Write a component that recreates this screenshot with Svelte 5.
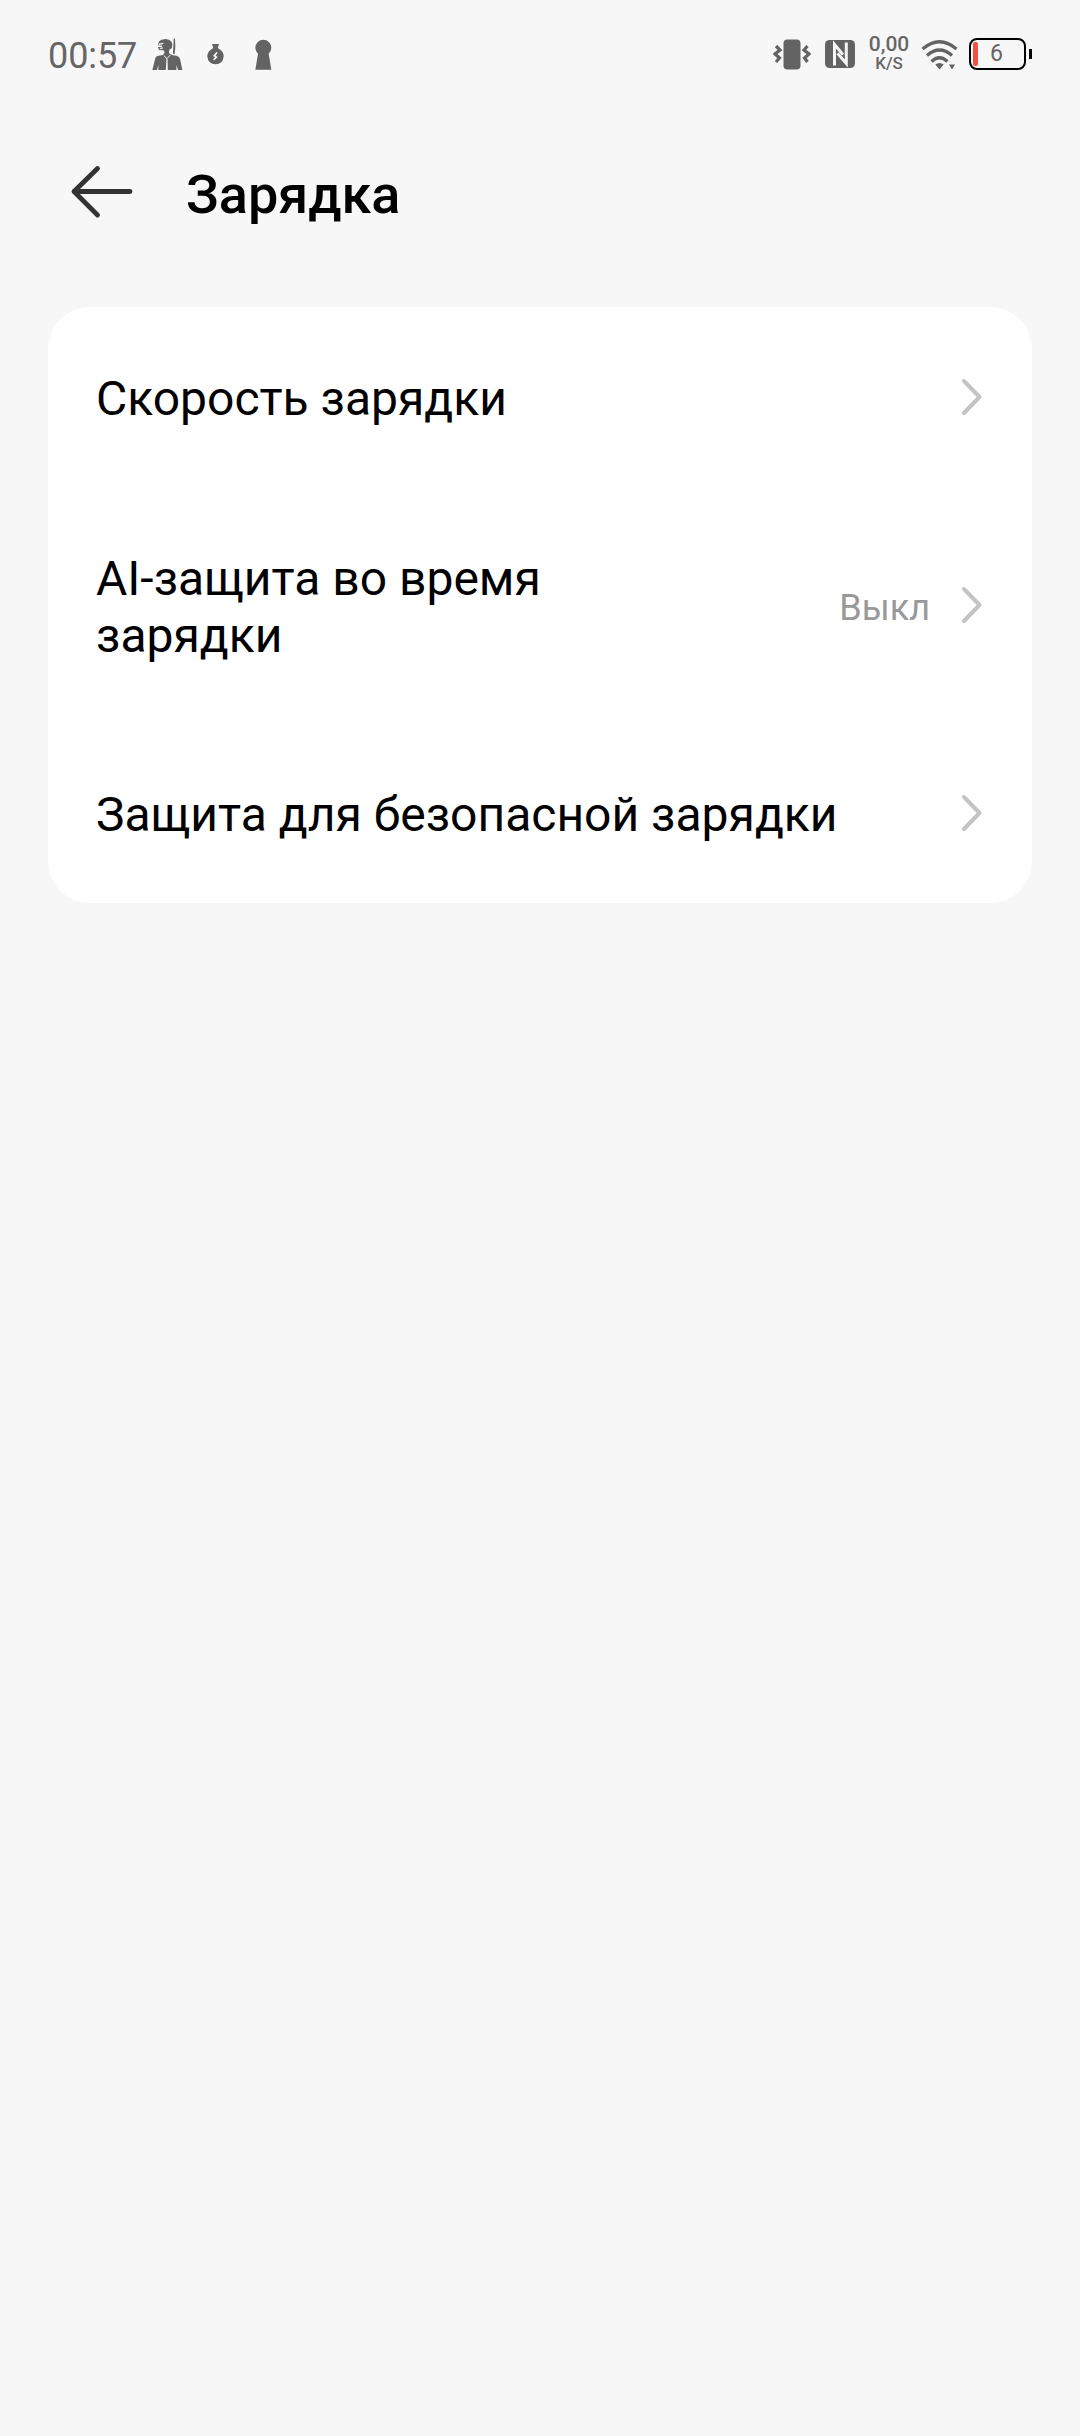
<script>
  const rows = [
    { title: "Скорость зарядки" },
    { title: "AI-защита во время зарядки", value: "Выкл" },
    { title: "Защита для безопасной зарядки" },
  ];
</script>

<div class="screen">
  <header class="status">
    <div class="left">
      <span class="time">00:57</span>
      <!-- game notification -->
      <svg class="soldier" width="32" height="34" viewBox="0 0 96 102">
        <path
          d="M4 99 L13 63 Q15 57 22 56 L35 54 L41 47 L38 40 L24 39 L21 30 L33 30 L33 26 L21 25 L23 14 Q30 6 43 6 Q62 7 64 22 L63 33 L55 38 L54 49 L66 55 L76 56 Q84 58 87 65 L94 99 L81 99 L77 84 L76 99 L53 99 L51 68 L45 58 L40 70 L39 99 L22 99 L22 84 L18 99 Z"
        />
        <path d="M68 6 L70 3 L72 6 L73 30 L71 52 L66 50 Z" />
        <path class="cut" d="M22 20 L36 17 L38 21 L24 24 Z M26 33 L36 31 L35 35 L27 36 Z" />
        <path d="M40 58 H56 L54 99 H50 L48 62 L44 99 H38 Z" />
        <path class="seam" d="M38 55 L48 65 L59 53 M48 65 L48 99" />
      </svg>
      <svg class="bag" width="17" height="22" viewBox="0 0 51 66">
        <path d="M15 3 H36 L32 15 Q50 24 50 40 Q48 64 25.500 64 Q3 64 1 40 Q1 24 19 15 Z" />
        <path class="cut" d="M28 27 L18 39 L24 42 L18 50 L22 52 L32 42 L26 38 L32 29 Z" />
      </svg>
      <svg class="keyhole" width="17" height="31" viewBox="0 0 51 93">
        <path d="M1 92 L9 44 A24 24 0 1 1 41 44 L49 92 Z" />
      </svg>
    </div>

    <div class="right">
      <svg class="vibrate" width="38" height="32" viewBox="0 0 38 32">
        <rect x="10.500" y="1.500" width="17" height="30" rx="4" />
        <path d="M3 8 L7 12 L2 16 L6.500 20 L3 24" />
        <path d="M34.500 8 L31 12 L36 16 L31.500 20 L34.500 24" />
      </svg>
      <svg class="nfc" width="30" height="28" viewBox="0 0 30 28">
        <rect width="30" height="28" rx="4.500" />
        <path d="M9.500 24 V4.500 L17 13.500" />
        <path d="M21.300 4 V23.500 L13.500 14.500" />
      </svg>
      <div class="speed">
        <span>0,00</span>
        <small>K/S</small>
      </div>
      <svg class="wifi" width="37" height="31" viewBox="0 0 37 31">
        <path d="M1.500 10 Q18.500 -4.500 35.500 10" />
        <path d="M6 16.500 Q18.500 5.500 31 16.500" />
        <path d="M10.500 22.500 Q18.500 15 26.500 22.500" />
        <path class="dot" d="M14.300 25.500 Q18.500 22.500 22.700 25.500 L18.500 30.500 Z M28 25.500 H34 L31 30.500 Z" />
      </svg>
      <div class="battery">
        <i></i>
        <span>6</span>
      </div>
      <b class="nub"></b>
    </div>
  </header>

  <nav>
    <svg class="back" width="64" height="54" viewBox="0 0 64 54">
      <path d="M28.500 3.500 L5 26.500 L28.500 50 M5 26.500 H61" />
    </svg>
    <h1>Зарядка</h1>
  </nav>

  <main>
    {#each rows as row}
      <div class="row">
        <span class="title">{row.title}</span>
        {#if row.value}
          <span class="value">{row.value}</span>
        {/if}
        <svg class="chevron" width="22" height="38" viewBox="0 0 22 38">
          <path d="M2 3 L17.500 19 L2 35" />
        </svg>
      </div>
    {/each}
  </main>
</div>

<style>
  :global(body) {
    background: #f7f7f7;
  }

  .screen {
    box-sizing: border-box;
    width: 1080px;
    height: 2436px;
    background: #f7f7f7;
    color: #000;
    font-family: Roboto, "Noto Sans", sans-serif;
    overflow: hidden;
  }

  svg {
    display: block;
    flex: none;
  }

  /* status bar */
  .status {
    display: flex;
    justify-content: space-between;
    height: 108px;
    padding: 0 48px;
    color: #666;
  }

  .left,
  .right {
    display: flex;
    align-items: center;
    height: 108px;
  }

  .left svg,
  .nfc rect,
  .vibrate rect {
    fill: #636363;
  }

  .left .cut {
    fill: #f7f7f7;
  }

  .left .seam {
    fill: none;
    stroke: #f7f7f7;
    stroke-width: 3;
  }

  .time {
    width: 103px;
    font-size: 36px;
    line-height: 42px;
    margin-top: 3px;
    letter-spacing: -0.1px;
  }

  .soldier {
    margin-right: 24px;
  }

  .bag {
    margin-right: 31px;
  }

  .vibrate {
    margin-right: 14px;
  }

  .vibrate path,
  .wifi path {
    fill: none;
    stroke: #636363;
    stroke-width: 3.2;
  }

  .nfc {
    margin-right: 14px;
  }

  .nfc path {
    fill: none;
    stroke: #f7f7f7;
    stroke-width: 3;
    stroke-linecap: square;
  }

  .speed {
    display: flex;
    flex-direction: column;
    align-items: center;
    width: 40px;
    margin: -2px 12px 0 0;
    font-weight: 500;
  }

  .speed span {
    font-size: 21px;
    line-height: 20px;
  }

  .speed small {
    font-size: 17px;
    line-height: 18px;
  }

  .wifi {
    margin-right: 11px;
  }

  .wifi .dot {
    fill: #636363;
    stroke: none;
  }

  .battery {
    box-sizing: border-box;
    display: flex;
    align-items: center;
    width: 57px;
    height: 32px;
    padding: 0 2px;
    border: 2px solid #000;
    border-radius: 8px;
  }

  .battery i {
    width: 5px;
    height: 24px;
    border-radius: 2px;
    background: #f25243;
  }

  .battery span {
    margin-left: 12px;
    font-size: 23px;
    line-height: 26px;
  }

  .nub {
    width: 3px;
    height: 10px;
    margin-left: 3px;
    background: #000;
  }

  /* title bar */
  nav {
    display: flex;
    align-items: center;
    height: 168px;
    padding-left: 69px;
  }

  .back path {
    fill: none;
    stroke: #333;
    stroke-width: 4.8;
    stroke-linecap: round;
    stroke-linejoin: round;
  }

  h1 {
    margin: 6px 0 0 53px;
    font-size: 54px;
    font-weight: 500;
    line-height: 64px;
  }

  /* settings card */
  main {
    display: flex;
    flex-direction: column;
    gap: 28px;
    margin: 31px 48px 0;
    border-radius: 42px;
    background: #fff;
  }

  .row {
    display: flex;
    align-items: center;
    height: 180px;
    padding: 0 48px;
  }

  .title {
    max-width: 760px;
    margin-right: auto;
    padding-top: 3px;
    font-size: 48px;
    line-height: 57px;
  }

  .title:has(+ .value) {
    max-width: 520px;
  }

  .value {
    margin-right: 32px;
    padding-top: 5px;
    color: #999;
    font-size: 36px;
    line-height: 42px;
  }

  .chevron path {
    fill: none;
    stroke: #c4c4c4;
    stroke-width: 4;
    stroke-linecap: round;
    stroke-linejoin: round;
  }
</style>
